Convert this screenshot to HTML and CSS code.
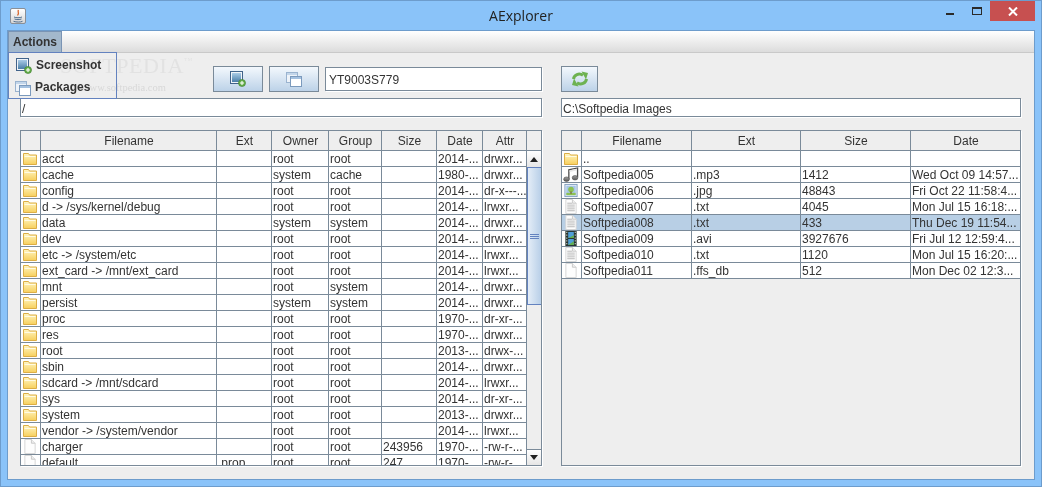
FILE: index.html
```html
<!DOCTYPE html>
<html lang="en">

<head>
    <meta charset="UTF-8">
    <title>AExplorer</title>
    <link rel="stylesheet" href="styles.css">
</head>

<body>
    <svg class="defs" width="0" height="0">
        <defs>
            <linearGradient id="folderFill" x1="0" y1="0" x2="0" y2="1">
                <stop offset="0" stop-color="#fff6c4"/>
                <stop offset="1" stop-color="#f7cf5c"/>
            </linearGradient>
            <linearGradient id="screenFill" x1="0" y1="0" x2="0" y2="1">
                <stop offset="0" stop-color="#a9cbe6"/>
                <stop offset="1" stop-color="#4a7ea8"/>
            </linearGradient>
            <linearGradient id="noteFill" x1="0" y1="0" x2="0" y2="1">
                <stop offset="0" stop-color="#a0a0a0"/>
                <stop offset="1" stop-color="#5a5a5a"/>
            </linearGradient>
            <symbol id="i-folder" viewBox="0 0 16 15">
                <path d="M1.500 13.500V2.500h5l1 1.500h7v9.500z" fill="url(#folderFill)" stroke="#dcae45"/>
                <path d="M2.500 5.500h11" stroke="#fffbe4"/>
            </symbol>
            <symbol id="i-file" viewBox="0 0 16 16">
                <path d="M2.500 .5h7l4 4v11h-11z" fill="#fdfdfd" stroke="#d4d4d4"/>
                <path d="M9.500 .5v4h4" fill="#efefef" stroke="#c8c8c8"/>
            </symbol>
            <symbol id="i-text" viewBox="0 0 16 16">
                <use href="#i-file"/>
                <path d="M4 4.500h5M4 6.500h8M4 8.500h8M4 10.500h8M4 12.500h8" stroke="#b5b5b5"/>
            </symbol>
            <symbol id="i-music" viewBox="0 0 16 16">
                <path d="M5.700 13V3L15 1v10" fill="none" stroke="#4c4c4c" stroke-width="1.400"/>
                <path d="M6.500 3.500l7.800-1.600v1.700L6.500 5.200z" fill="#e8e8e8"/>
                <ellipse cx="3.200" cy="13" rx="3" ry="2.400" fill="url(#noteFill)" stroke="#444" stroke-width=".6"/>
                <ellipse cx="12.300" cy="11.500" rx="3" ry="2.400" fill="url(#noteFill)" stroke="#444" stroke-width=".6"/>
            </symbol>
            <symbol id="i-image" viewBox="0 0 16 16">
                <rect x="1.500" y="1.500" width="13" height="13" fill="#e3edf7" stroke="#7f9dbd"/>
                <rect x="3" y="3" width="10" height="10" fill="#a6c6e8"/>
                <rect x="3" y="10.500" width="10" height="2.500" fill="#8cc152"/>
                <circle cx="8" cy="7" r="3" fill="#8cc152"/>
                <rect x="7.400" y="9" width="1.200" height="2.500" fill="#7a5a30"/>
            </symbol>
            <symbol id="i-video" viewBox="0 0 16 16">
                <rect x="2" y="0" width="12" height="16" fill="#26332e"/>
                <path d="M3 1.500h1M3 4.500h1M3 7.500h1M3 10.500h1M3 13.500h1M12 1.500h1M12 4.500h1M12 7.500h1M12 10.500h1M12 13.500h1" stroke="#dfe6df" stroke-width="1.300"/>
                <rect x="5" y="1" width="6" height="6.500" fill="#4f9fd8"/>
                <path d="M5 7.500l6-3v3z" fill="#63b04e"/>
                <rect x="5" y="8.500" width="6" height="6.500" fill="#4f9fd8"/>
                <path d="M5 15l6-4v4z" fill="#63b04e"/>
            </symbol>
            <symbol id="i-shot" viewBox="0 0 16 16">
                <rect x=".5" y=".5" width="12" height="12" fill="#f0f4f9" stroke="#41638a"/>
                <rect x="2" y="2" width="9" height="9" fill="url(#screenFill)"/>
                <circle cx="12" cy="12" r="3.500" fill="#66b04a" stroke="#3b7a2c" stroke-width=".6"/>
                <path d="M12 10v4M10 12h4" stroke="#fff" stroke-width="1.100"/>
            </symbol>
            <symbol id="i-windows" viewBox="0 0 16 15">
                <rect x=".5" y=".5" width="11" height="10" fill="#eef3f9" stroke="#9ab3cf"/>
                <rect x="1" y="1" width="10" height="2" fill="#c3d6ea"/>
                <rect x="4.500" y="4.500" width="11" height="10" fill="#fff" stroke="#7b9abd"/>
                <rect x="5" y="5" width="10" height="2" fill="#a4c1e0"/>
            </symbol>
        </defs>
    </svg>

    <div class="window">
        <div class="titlebar">
            <div class="appicon">
                <svg width="14" height="14" viewBox="0 0 14 14">
                    <path d="M7.500 1C6 3 9 4 6.500 6.500" fill="none" stroke="#d9662c" stroke-width="1.300"/>
                    <path d="M3 8c2 1 6 1 8 0M3.500 10c2 .8 5 .8 7 0M2.500 12.300c3 1 7 1 9 0" fill="none" stroke="#52708f"/>
                </svg>
            </div>
            <div class="title">AExplorer</div>
            <div class="controls">
                <div class="ctl-min"><span></span></div>
                <div class="ctl-max"><span></span></div>
                <div class="ctl-close">
                    <svg width="10" height="9" viewBox="0 0 10 9"><path d="M1 .5l8 8M9 .5l-8 8" stroke="#fff" stroke-width="2"/></svg>
                </div>
            </div>
        </div>

        <div class="content">
            <div class="menubar">
                <div class="menu">Actions</div>
            </div>

            <div class="popup">
                <div class="popup-item first"><svg class="ico-shot"><use href="#i-shot"/></svg>Screenshot</div>
                <div class="popup-item"><svg class="ico-win"><use href="#i-windows"/></svg>Packages</div>
            </div>
            <div class="watermark">SOFTPEDIA<sup>TM</sup></div>
            <div class="watermark-url">www.softpedia.com</div>

            <div class="panels">
                <div class="side left">
                    <div class="toolbar">
                        <button class="tbtn"><svg class="ico-shot"><use href="#i-shot"/></svg></button>
                        <button class="tbtn"><svg class="ico-win"><use href="#i-windows"/></svg></button>
                        <div class="field device">YT9003S779</div>
                    </div>
                    <div class="field path">/</div>
                    <div class="pane">
                        <div class="view">
                            <table>
                                <colgroup>
                                    <col class="c20"><col class="c176"><col class="c55"><col class="c57"><col class="c53"><col class="c55"><col class="c46"><col class="c44">
                                </colgroup>
                                <thead>
                                    <tr><th></th><th>Filename</th><th>Ext</th><th>Owner</th><th>Group</th><th>Size</th><th>Date</th><th>Attr</th></tr>
                                </thead>
                                <tbody>
                                    <tr><td><svg class="ico"><use href="#i-folder"/></svg></td><td>acct</td><td></td><td>root</td><td>root</td><td></td><td>2014-...</td><td>drwxr...</td></tr>
                                    <tr><td><svg class="ico"><use href="#i-folder"/></svg></td><td>cache</td><td></td><td>system</td><td>cache</td><td></td><td>1980-...</td><td>drwxr...</td></tr>
                                    <tr><td><svg class="ico"><use href="#i-folder"/></svg></td><td>config</td><td></td><td>root</td><td>root</td><td></td><td>2014-...</td><td>dr-x---...</td></tr>
                                    <tr><td><svg class="ico"><use href="#i-folder"/></svg></td><td>d -&gt; /sys/kernel/debug</td><td></td><td>root</td><td>root</td><td></td><td>2014-...</td><td>lrwxr...</td></tr>
                                    <tr><td><svg class="ico"><use href="#i-folder"/></svg></td><td>data</td><td></td><td>system</td><td>system</td><td></td><td>2014-...</td><td>drwxr...</td></tr>
                                    <tr><td><svg class="ico"><use href="#i-folder"/></svg></td><td>dev</td><td></td><td>root</td><td>root</td><td></td><td>2014-...</td><td>drwxr...</td></tr>
                                    <tr><td><svg class="ico"><use href="#i-folder"/></svg></td><td>etc -&gt; /system/etc</td><td></td><td>root</td><td>root</td><td></td><td>2014-...</td><td>lrwxr...</td></tr>
                                    <tr><td><svg class="ico"><use href="#i-folder"/></svg></td><td>ext_card -&gt; /mnt/ext_card</td><td></td><td>root</td><td>root</td><td></td><td>2014-...</td><td>lrwxr...</td></tr>
                                    <tr><td><svg class="ico"><use href="#i-folder"/></svg></td><td>mnt</td><td></td><td>root</td><td>system</td><td></td><td>2014-...</td><td>drwxr...</td></tr>
                                    <tr><td><svg class="ico"><use href="#i-folder"/></svg></td><td>persist</td><td></td><td>system</td><td>system</td><td></td><td>2014-...</td><td>drwxr...</td></tr>
                                    <tr><td><svg class="ico"><use href="#i-folder"/></svg></td><td>proc</td><td></td><td>root</td><td>root</td><td></td><td>1970-...</td><td>dr-xr-...</td></tr>
                                    <tr><td><svg class="ico"><use href="#i-folder"/></svg></td><td>res</td><td></td><td>root</td><td>root</td><td></td><td>1970-...</td><td>drwxr...</td></tr>
                                    <tr><td><svg class="ico"><use href="#i-folder"/></svg></td><td>root</td><td></td><td>root</td><td>root</td><td></td><td>2013-...</td><td>drwx-...</td></tr>
                                    <tr><td><svg class="ico"><use href="#i-folder"/></svg></td><td>sbin</td><td></td><td>root</td><td>root</td><td></td><td>2014-...</td><td>drwxr...</td></tr>
                                    <tr><td><svg class="ico"><use href="#i-folder"/></svg></td><td>sdcard -&gt; /mnt/sdcard</td><td></td><td>root</td><td>root</td><td></td><td>2014-...</td><td>lrwxr...</td></tr>
                                    <tr><td><svg class="ico"><use href="#i-folder"/></svg></td><td>sys</td><td></td><td>root</td><td>root</td><td></td><td>2014-...</td><td>dr-xr-...</td></tr>
                                    <tr><td><svg class="ico"><use href="#i-folder"/></svg></td><td>system</td><td></td><td>root</td><td>root</td><td></td><td>2013-...</td><td>drwxr...</td></tr>
                                    <tr><td><svg class="ico"><use href="#i-folder"/></svg></td><td>vendor -&gt; /system/vendor</td><td></td><td>root</td><td>root</td><td></td><td>2014-...</td><td>lrwxr...</td></tr>
                                    <tr><td><svg class="ico"><use href="#i-file"/></svg></td><td>charger</td><td></td><td>root</td><td>root</td><td>243956</td><td>1970-...</td><td>-rw-r-...</td></tr>
                                    <tr><td><svg class="ico"><use href="#i-file"/></svg></td><td>default</td><td>.prop</td><td>root</td><td>root</td><td>247</td><td>1970-...</td><td>-rw-r-...</td></tr>
                                </tbody>
                            </table>
                        </div>
                        <div class="scrollbar">
                            <div class="corner"></div>
                            <div class="arrow"><span class="up"></span></div>
                            <div class="thumb"><span></span></div>
                            <div class="track"></div>
                            <div class="arrow bottom"><span class="down"></span></div>
                        </div>
                    </div>
                </div>

                <div class="side right">
                    <div class="toolbar">
                        <button class="tbtn refresh">
                            <svg width="18" height="18" viewBox="0 0 18 18">
                                <path d="M2.500 9C3 5 8 2.500 12 5.300" fill="none" stroke="#6db251" stroke-width="3"/>
                                <path d="M10.500 1.500L17 3l-2 6.500z" fill="#6db251"/>
                                <path d="M15.500 9C15 13 10 15.500 6 12.700" fill="none" stroke="#6db251" stroke-width="3"/>
                                <path d="M7.500 16.500L1 15l2-6.500z" fill="#6db251"/>
                            </svg>
                        </button>
                    </div>
                    <div class="field path">C:\Softpedia Images</div>
                    <div class="pane">
                        <div class="view">
                            <table>
                                <colgroup>
                                    <col class="c20"><col class="c110"><col class="c109"><col class="c110"><col class="c109">
                                </colgroup>
                                <thead>
                                    <tr><th></th><th>Filename</th><th>Ext</th><th>Size</th><th class="last">Date</th></tr>
                                </thead>
                                <tbody>
                                    <tr><td><svg class="ico"><use href="#i-folder"/></svg></td><td>..</td><td></td><td></td><td class="last"></td></tr>
                                    <tr><td><svg class="ico"><use href="#i-music"/></svg></td><td>Softpedia005</td><td>.mp3</td><td>1412</td><td class="last">Wed Oct 09 14:57...</td></tr>
                                    <tr><td><svg class="ico"><use href="#i-image"/></svg></td><td>Softpedia006</td><td>.jpg</td><td>48843</td><td class="last">Fri Oct 22 11:58:4...</td></tr>
                                    <tr><td><svg class="ico"><use href="#i-text"/></svg></td><td>Softpedia007</td><td>.txt</td><td>4045</td><td class="last">Mon Jul 15 16:18:...</td></tr>
                                    <tr class="selected"><td><svg class="ico"><use href="#i-text"/></svg></td><td>Softpedia008</td><td>.txt</td><td>433</td><td class="last">Thu Dec 19 11:54...</td></tr>
                                    <tr><td><svg class="ico"><use href="#i-video"/></svg></td><td>Softpedia009</td><td>.avi</td><td>3927676</td><td class="last">Fri Jul 12 12:59:4...</td></tr>
                                    <tr><td><svg class="ico"><use href="#i-text"/></svg></td><td>Softpedia010</td><td>.txt</td><td>1120</td><td class="last">Mon Jul 15 16:20:...</td></tr>
                                    <tr><td><svg class="ico"><use href="#i-file"/></svg></td><td>Softpedia011</td><td>.ffs_db</td><td>512</td><td class="last">Mon Dec 02 12:3...</td></tr>
                                </tbody>
                            </table>
                        </div>
                    </div>
                </div>
            </div>
        </div>
    </div>
</body>

</html>
```

FILE: styles.css
```css
* {
    box-sizing: border-box;
}

html, body {
    margin: 0;
    height: 100%;
    overflow: hidden;
}

body {
    font-family: "Liberation Sans", Arial, sans-serif;
    font-size: 12px;
    color: #333333;
}

.defs {
    position: absolute;
}

.window {
    width: 1042px;
    height: 487px;
    background: #8ac3f9;
    border: 1px solid #6d9ccc;
    display: flex;
    flex-direction: column;
}

/* title bar */
.titlebar {
    height: 29px;
    flex: none;
    display: grid;
    grid-template-columns: 1fr auto 1fr;
}

.appicon {
    width: 16px;
    height: 16px;
    margin: 7px 0 0 9px;
    background: linear-gradient(#ffffff, #d5d5d5);
    border: 1px solid #8a8f96;
    border-radius: 2px;
}

.appicon svg {
    display: block;
}

.title {
    font-family: "Open Sans", sans-serif;
    font-size: 14px;
    line-height: 29px;
    color: #222222;
}

.controls {
    display: flex;
    height: 20px;
    margin-right: 6px;
    justify-self: end;
}

.ctl-min, .ctl-max {
    width: 26px;
}

.ctl-min span {
    display: block;
    width: 8px;
    height: 2px;
    margin: 12px 0 0 8px;
    background: #2a2a2a;
}

.ctl-max span {
    display: block;
    width: 10px;
    height: 8px;
    margin: 6px 0 0 8px;
    border: 1px solid #2a2a2a;
    border-top-width: 2px;
}

.ctl-close {
    width: 45px;
    background: #c75050;
    display: flex;
    align-items: center;
    justify-content: center;
}

/* main area */
.content {
    flex: 1;
    margin: 0 6px 6px;
    background: #eeeeee;
    border: 1px solid #6d9ccc;
    display: flex;
    flex-direction: column;
    position: relative;
}

.menubar {
    height: 22px;
    flex: none;
    background: linear-gradient(#ffffff, #dcdcdc);
    border-bottom: 1px solid #c9c9c9;
}

.menu {
    width: 54px;
    height: 22px;
    background: #a3b8cc;
    border: 1px solid #7a94b4;
    border-bottom: none;
    font-weight: bold;
    line-height: 20px;
    text-align: center;
}

.popup {
    position: absolute;
    left: 0;
    top: 21px;
    width: 109px;
    height: 47px;
    background: #eeeeee;
    border: 1px solid #6382bf;
    padding: 2px 0 0 6px;
    font-weight: bold;
}

.popup-item {
    display: flex;
    align-items: center;
    gap: 4px;
    height: 20px;
}

.popup-item svg {
    margin-top: 2px;
}

.popup-item.first {
    margin-bottom: 2px;
    padding-left: 1px;
}

.ico-shot {
    width: 16px;
    height: 16px;
}

.ico-win {
    width: 16px;
    height: 15px;
}

.watermark, .watermark-url {
    position: absolute;
    font-family: "Liberation Serif", serif;
    mix-blend-mode: darken;
}

.watermark {
    left: 52px;
    top: 22px;
    font-size: 22px;
    letter-spacing: .6px;
    color: #e2e2e2;
}

.watermark sup {
    font-size: 5px;
    vertical-align: 12px;
}

.watermark-url {
    left: 74px;
    top: 51px;
    font-size: 10.5px;
    color: #d8d8d8;
}

.panels {
    flex: 1;
    display: flex;
    gap: 19px;
    padding: 13px 0 0 12px;
}

.side {
    display: flex;
    flex-direction: column;
}

.side.left {
    width: 522px;
}

.side.right {
    width: 460px;
}

.toolbar {
    height: 26px;
    display: flex;
    align-items: center;
    justify-content: flex-end;
    gap: 6px;
    margin-bottom: 6px;
}

.side.right .toolbar {
    justify-content: flex-start;
}

.tbtn {
    width: 50px;
    height: 26px;
    padding: 0;
    background: linear-gradient(#f3f8fd, #bcd2e8);
    border: 1px solid #7a8a99;
    display: flex;
    align-items: center;
    justify-content: center;
}

.tbtn.refresh {
    width: 37px;
}

.field {
    background: #ffffff;
    border: 1px solid #7a8a99;
    box-shadow: 1px 1px 0 #ffffff;
    padding-left: 3px;
}

.field.device {
    width: 217px;
    height: 24px;
    line-height: 24px;
}

.field.path {
    height: 19px;
    line-height: 20px;
    padding-left: 1px;
    margin-bottom: 13px;
}

/* tables */
.pane {
    height: 336px;
    display: flex;
    border: 1px solid #7a8a99;
    border-top: none;
    box-shadow: 1px 1px 0 #ffffff;
}

.view {
    flex: 1;
    overflow: hidden;
}

table {
    border-collapse: separate;
    border-spacing: 0;
    table-layout: fixed;
    width: 100%;
}

.c20 { width: 20px; }
.c44 { width: 44px; }
.c46 { width: 46px; }
.c53 { width: 53px; }
.c55 { width: 55px; }
.c57 { width: 57px; }
.c109 { width: 109px; }
.c110 { width: 110px; }
.c176 { width: 176px; }

th {
    height: 21px;
    padding: 1px 0 0 1px;
    font-weight: normal;
    text-align: center;
    background: #eeeeee;
    border-top: 1px solid #7a8a99;
    border-right: 1px solid #7a8a99;
    border-bottom: 1px solid #7a8a99;
}

td {
    height: 16px;
    padding: 1px 0 0 1px;
    background: #ffffff;
    border-right: 1px solid #7a8a99;
    border-bottom: 1px solid #7a8a99;
    white-space: nowrap;
    overflow: hidden;
    line-height: 14px;
}

td:first-child {
    padding: 0;
}

th.last, td.last {
    border-right: none;
}

.selected td {
    background: #b8cfe5;
}

.ico {
    display: block;
    width: 16px;
    height: 15px;
    margin-left: 1px;
}

.scrollbar {
    width: 14px;
    flex: none;
    display: flex;
    flex-direction: column;
    background: #eeeeee;
}

.corner {
    height: 21px;
    flex: none;
    border-top: 1px solid #7a8a99;
    border-bottom: 1px solid #7a8a99;
}

.arrow {
    height: 16px;
    flex: none;
    background: linear-gradient(#ffffff, #e6e6e6);
    display: flex;
    align-items: center;
    justify-content: center;
}

.arrow.bottom {
    border-top: 1px solid #7a8a99;
}

.up, .down {
    width: 0;
    height: 0;
    border-left: 4px solid transparent;
    border-right: 4px solid transparent;
}

.up {
    border-bottom: 5px solid #222222;
}

.down {
    border-top: 5px solid #222222;
}

.thumb {
    height: 138px;
    flex: none;
    background: linear-gradient(90deg, #e4edf7, #b8cfe8);
    border: 1px solid #6382bf;
    border-right: none;
    display: flex;
    align-items: center;
    justify-content: center;
}

.thumb span {
    display: block;
    width: 9px;
    height: 5px;
    border-top: 1px solid #6382bf;
    border-bottom: 1px solid #6382bf;
    background: linear-gradient(#6382bf, #6382bf) center / 100% 1px no-repeat;
}

.track {
    flex: 1;
}
```
